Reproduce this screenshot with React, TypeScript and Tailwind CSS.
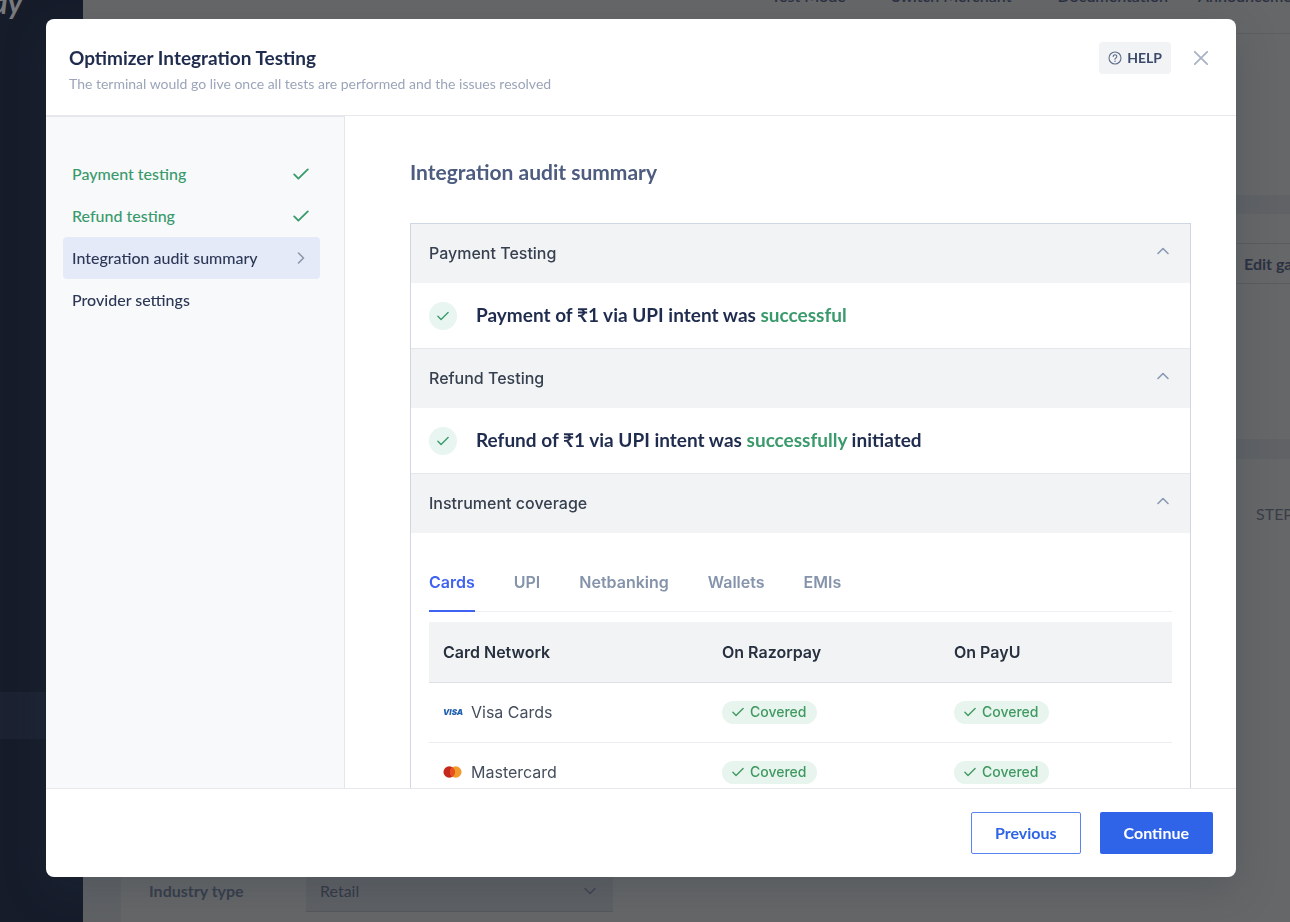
import type { ReactNode } from 'react'

type IconProps = { className?: string }

const steps = [
  { label: 'Payment testing', status: 'done' },
  { label: 'Refund testing', status: 'done' },
  { label: 'Integration audit summary', status: 'current' },
  { label: 'Provider settings', status: 'pending' },
]

const tabs = ['Cards', 'UPI', 'Netbanking', 'Wallets', 'EMIs']

const networks = [
  { name: 'Visa Cards', logo: <VisaLogo /> },
  { name: 'Mastercard', logo: <MastercardLogo /> },
]

function CheckIcon({ className }: IconProps) {
  return (
    <svg viewBox="0 0 16 12" fill="none" className={className} aria-hidden="true">
      <path
        d="M1.2 6.4 5.4 10.6 14.8 1.4"
        stroke="currentColor"
        strokeWidth="1.8"
        strokeLinecap="round"
        strokeLinejoin="round"
      />
    </svg>
  )
}

function ChevronIcon({ className }: IconProps) {
  return (
    <svg viewBox="0 0 12 12" fill="none" className={className} aria-hidden="true">
      <path
        d="M1 8.5 6 3.5 11 8.5"
        stroke="currentColor"
        strokeWidth="1.6"
        strokeLinecap="round"
        strokeLinejoin="round"
      />
    </svg>
  )
}

function HelpIcon({ className }: IconProps) {
  return (
    <svg viewBox="0 0 14 14" fill="none" className={className} aria-hidden="true">
      <circle cx="7" cy="7" r="6" stroke="currentColor" strokeWidth="1.1" />
      <path
        d="M5.2 5.5a1.8 1.8 0 1 1 2.7 1.6c-.6.35-.9.6-.9 1.2"
        stroke="currentColor"
        strokeWidth="1.1"
        strokeLinecap="round"
      />
      <circle cx="7" cy="10.2" r=".7" fill="currentColor" />
    </svg>
  )
}

function CloseIcon({ className }: IconProps) {
  return (
    <svg viewBox="0 0 14 14" fill="none" className={className} aria-hidden="true">
      <path
        d="M.8.8 13.2 13.2M13.2.8.8 13.2"
        stroke="currentColor"
        strokeWidth="1.8"
        strokeLinecap="round"
      />
    </svg>
  )
}

function VisaLogo() {
  return (
    <span className="bg-linear-to-br from-[#e0a83c] from-5% to-[#1f5fae] to-20% bg-clip-text text-[8px] leading-3 font-black text-transparent italic">
      VISA
    </span>
  )
}

function MastercardLogo() {
  return (
    <svg viewBox="0 0 20 13" className="h-3 w-[19px]" aria-hidden="true">
      <circle cx="6.5" cy="6.5" r="6.3" fill="#c5281c" />
      <circle cx="13.5" cy="6.5" r="6.3" fill="#f39a2d" />
      <path d="M10 1.26a6.3 6.3 0 0 1 0 10.48 6.3 6.3 0 0 1 0-10.48Z" fill="#e9501f" />
    </svg>
  )
}

function Covered() {
  return (
    <span className="flex h-[23px] w-fit items-center gap-1.5 rounded-full bg-[#e8f5ee] px-2.5 text-sm font-medium text-[#3f9960]">
      <CheckIcon className="h-2.5 w-3" />
      Covered
    </span>
  )
}

function Section({ title, children }: { title: string; children: ReactNode }) {
  return (
    <section className="border-t border-[#e4e8ec] first:border-t-0">
      <h3>
        <button
          type="button"
          className="flex h-[59px] w-full items-center justify-between bg-[#f2f3f5] pr-[21px] pb-0.5 pl-[18px] text-left font-medium text-[#36404f]"
        >
          {title}
          <ChevronIcon className="mb-1 size-3 text-[#8a9ab5]" />
        </button>
      </h3>
      {children}
    </section>
  )
}

function Result({ children }: { children: ReactNode }) {
  return (
    <div className="flex h-[65px] items-center gap-[19px] px-[18px]">
      <span className="flex size-7 items-center justify-center rounded-full bg-[#e8f5f0] text-[#3a9a6b]">
        <CheckIcon className="h-2.5 w-3" />
      </span>
      <p className="text-[19px] font-bold text-[#1f2c4e] [font-family:Lato,sans-serif]">
        {children}
      </p>
    </div>
  )
}

function Dashboard() {
  return (
    <div className="flex h-screen overflow-hidden bg-[#606265] text-[#2b3143]" inert>
      <aside className="w-[83px] shrink-0 bg-[#161c2a]">
        <div className="flex h-[692px] justify-start">
          <span className="-mt-4 -ml-2 text-3xl font-bold text-[#77797c] italic">ay</span>
        </div>
        <div className="h-[47px] bg-[#1c2231]" />
      </aside>
      <div className="flex min-w-0 flex-1 flex-col bg-[#666768]">
        <nav className="flex h-[34px] shrink-0 justify-end gap-[46px] border-b border-[#5c5e61] text-base font-semibold whitespace-nowrap">
          <a href="#" className="-mt-4">Test Mode</a>
          <a href="#" className="-mt-4">Switch Merchant</a>
          <a href="#" className="-mt-4">Documentation</a>
          <a href="#" className="-mt-4 -ml-4 w-[92px]">Announcements</a>
        </nav>
        <div className="h-[161px] shrink-0" />
        <div className="h-[19px] shrink-0 bg-[#606265]" />
        <div className="h-[29px] shrink-0" />
        <div className="flex h-[41px] shrink-0 items-center justify-end overflow-hidden border-y border-[#595b5f] text-base font-bold whitespace-nowrap">
          <span className="w-[46px]">Edit gateway</span>
        </div>
        <div className="h-[155px] shrink-0" />
        <div className="h-5 shrink-0 bg-[#606265]" />
        <div className="flex flex-1">
          <div className="w-[38px] bg-[#606265]" />
          <div className="flex min-w-0 flex-1 flex-col justify-between overflow-hidden">
            <span className="mt-[43px] w-[34px] self-end text-base whitespace-nowrap text-[#3a3e48]">
              STEP 1
            </span>
            <div className="mb-2.5 flex items-center">
              <span className="w-[185px] pb-0.5 pl-7 text-base font-bold text-[#383d4b]">
                Industry type
              </span>
              <span className="flex h-10 w-[307px] items-center justify-between border-b border-[#55585d] bg-[#5f6164] pr-[17px] pb-0.5 pl-3.5 text-base text-[#343947]">
                Retail
                <ChevronIcon className="size-3 rotate-180 text-[#414653]" />
              </span>
            </div>
          </div>
        </div>
      </div>
    </div>
  )
}

export default function App() {
  return (
    <main className="[font-family:Lato,sans-serif]">
      <Dashboard />

      <div className="fixed inset-0 flex pt-[19px] pr-[54px] pb-[45px] pl-[46px]">
        <div
          role="dialog"
          aria-labelledby="dialog-title"
          className="flex min-w-0 flex-1 flex-col overflow-hidden rounded-lg bg-white shadow-[0_12px_40px_rgba(40,55,70,0.25)]"
        >
          <header className="flex h-[97px] shrink-0 items-start justify-between border-b border-[#e8e9ed] px-[23px] pt-[23px]">
            <div className="pt-1">
              <h1 id="dialog-title" className="text-[19px] leading-6 font-bold text-[#1f2c4e]">
                Optimizer Integration Testing
              </h1>
              <p className="mt-1 text-sm text-[#9ba5b9]">
                The terminal would go live once all tests are performed and the issues resolved
              </p>
            </div>
            <div className="flex items-center gap-[23px] pr-[5px]">
              <button
                type="button"
                className="flex h-8 items-center gap-[5px] rounded-sm bg-[#f2f3f5] px-[9px] text-sm font-bold text-[#3b4a6b]"
              >
                <HelpIcon className="size-3.5 text-[#5f6d8c]" />
                HELP
              </button>
              <button type="button" aria-label="Close" className="text-[#a9b3c7]">
                <CloseIcon className="size-3.5" />
              </button>
            </div>
          </header>

          <div className="flex min-h-0 flex-1">
            <nav className="w-[299px] shrink-0 border-t border-r border-[#e4e6ec] bg-[#f8f9fb] pt-9 pr-6 pl-[17px]">
              <ul>
                {steps.map(({ label, status }) => (
                  <li key={label}>
                    <a
                      href="#"
                      className={
                        status === 'done'
                          ? 'flex h-[42px] items-center justify-between px-[9px] text-base font-medium text-[#3a9a6b]'
                          : status === 'current'
                            ? 'flex h-[42px] items-center justify-between rounded-sm bg-[#e4eaf8] px-[9px] text-base font-medium text-[#2c3856]'
                            : 'flex h-[42px] items-center justify-between px-[9px] text-base font-medium text-[#2c3856]'
                      }
                    >
                      {label}
                      {status === 'done' && <CheckIcon className="mr-0.5 h-3 w-4" />}
                      {status === 'current' && (
                        <ChevronIcon className="mr-1 size-3 rotate-90 text-[#8f97ab]" />
                      )}
                    </a>
                  </li>
                ))}
              </ul>
            </nav>

            <div className="min-w-0 flex-1 overflow-hidden pt-[42px] pr-[45px] pl-[65px]">
              <h2 className="text-[21px] leading-7 font-bold text-[#4d5c7f]">
                Integration audit summary
              </h2>

              <div className="mt-[37px] border border-[#cfd7e3] [font-family:Inter,sans-serif]">
                <Section title="Payment Testing">
                  <Result>
                    Payment of ₹1 via UPI intent was <span className="text-[#3a9a6b]">successful</span>
                  </Result>
                </Section>
                <Section title="Refund Testing">
                  <Result>
                    Refund of ₹1 via UPI intent was{' '}
                    <span className="text-[#3a9a6b]">successfully</span> initiated
                  </Result>
                </Section>
                <Section title="Instrument coverage">
                  <div className="px-[18px] pt-[29px]">
                    <div
                      role="tablist"
                      className="flex gap-[39px] border-b border-[#eceef1] text-base font-semibold text-[#8594ab]"
                    >
                      {tabs.map((tab, i) => (
                        <button
                          key={tab}
                          type="button"
                          role="tab"
                          aria-selected={i === 0}
                          className="-mb-px h-[50px] border-b-2 border-transparent pb-2 aria-selected:border-[#3f62f0] aria-selected:text-[#3f62f0]"
                        >
                          {tab}
                        </button>
                      ))}
                    </div>

                    <table className="mt-2.5 w-full table-fixed text-left">
                      <thead>
                        <tr className="h-[60px] border-b border-[#dde1e8] bg-[#f2f3f5] text-[#27303f]">
                          <th className="w-[279px] pl-3.5 font-semibold">Card Network</th>
                          <th className="pl-3.5 font-semibold">On Razorpay</th>
                          <th className="pl-3.5 font-semibold">On PayU</th>
                        </tr>
                      </thead>
                      <tbody>
                        {networks.map(({ name, logo }) => (
                          <tr key={name} className="h-[60px] border-b border-[#ebedf0] text-[#454e5d]">
                            <td className="pl-3.5">
                              <div className="flex items-center">
                                <span className="flex w-7 items-center">{logo}</span>
                                {name}
                              </div>
                            </td>
                            <td className="pl-3.5">
                              <Covered />
                            </td>
                            <td className="pl-3.5">
                              <Covered />
                            </td>
                          </tr>
                        ))}
                      </tbody>
                    </table>
                  </div>
                </Section>
              </div>
            </div>
          </div>

          <footer className="flex h-[89px] shrink-0 items-center justify-end gap-[19px] border-t border-[#e8e9ed] px-[23px] text-base font-bold">
            <button
              type="button"
              className="h-[42px] rounded-xs border border-[#5b85ee] px-[23px] text-[#2f64e8]"
            >
              Previous
            </button>
            <button type="button" className="h-[42px] rounded-xs bg-[#2f64e8] px-6 text-white">
              Continue
            </button>
          </footer>
        </div>
      </div>
    </main>
  )
}
